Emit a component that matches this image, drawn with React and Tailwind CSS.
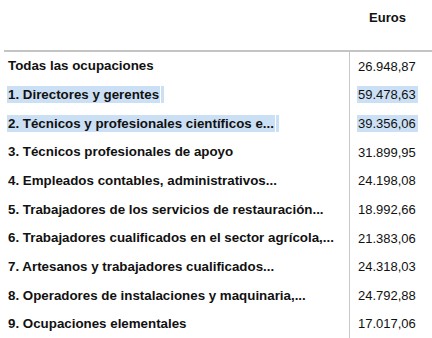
import React from 'react'

const rows = [
  { label: 'Todas las ocupaciones', value: '26.948,87' },
  { label: '1. Directores y gerentes', value: '59.478,63', sel: true },
  { label: '2. Técnicos y profesionales científicos e...', value: '39.356,06', sel: true },
  { label: '3. Técnicos profesionales de apoyo', value: '31.899,95' },
  { label: '4. Empleados contables, administrativos...', value: '24.198,08' },
  { label: '5. Trabajadores de los servicios de restauración...', value: '18.992,66' },
  { label: '6. Trabajadores cualificados en el sector agrícola,...', value: '21.383,06' },
  { label: '7. Artesanos y trabajadores cualificados...', value: '24.318,03' },
  { label: '8. Operadores de instalaciones y maquinaria,...', value: '24.792,88' },
  { label: '9. Ocupaciones elementales', value: '17.017,06' },
]

const App = () => {
  return (
    <div className="w-[432px] h-[338px] overflow-hidden bg-white text-[13px] text-[#111] font-['Liberation_Sans',Arial,sans-serif]">
      <div className="flex h-[50px]">
        <div className="w-[349px]" />
        <div className="w-[77px] pt-[8px] text-center font-bold">Euros</div>
      </div>
      <div className="ml-[4px] border-t-2 border-[#c4c4c4] flex">
        <div className="w-[346px] border-r border-[#c8c8c8]">
          {rows.map((r) => (
            <div key={r.label} className="h-[28.67px] flex items-center pl-[3px] font-bold text-[13.33px] whitespace-nowrap">
              {r.sel ? (
                <>
                  <span className="bg-[#cce0f5] px-[1px] leading-[17px]">{r.label}</span>
                  <span className="ml-[1px] w-[3px] h-[17px] bg-[#cce0f5]" />
                </>
              ) : (
                <span className="px-[1px]">{r.label}</span>
              )}
            </div>
          ))}
        </div>
        <div className="flex-1">
          {rows.map((r) => (
            <div key={r.value} className="h-[28.67px] flex items-center pl-[7px] whitespace-nowrap">
              {r.sel ? (
                <>
                  <span className="bg-[#cce0f5] leading-[17px] pl-[1px]">{r.value}</span>
                  <span className="w-[2px] h-[17px] bg-[#cce0f5]" />
                </>
              ) : (
                <span className="pl-[1px]">{r.value}</span>
              )}
            </div>
          ))}
        </div>
      </div>
    </div>
  )
}

export default App
